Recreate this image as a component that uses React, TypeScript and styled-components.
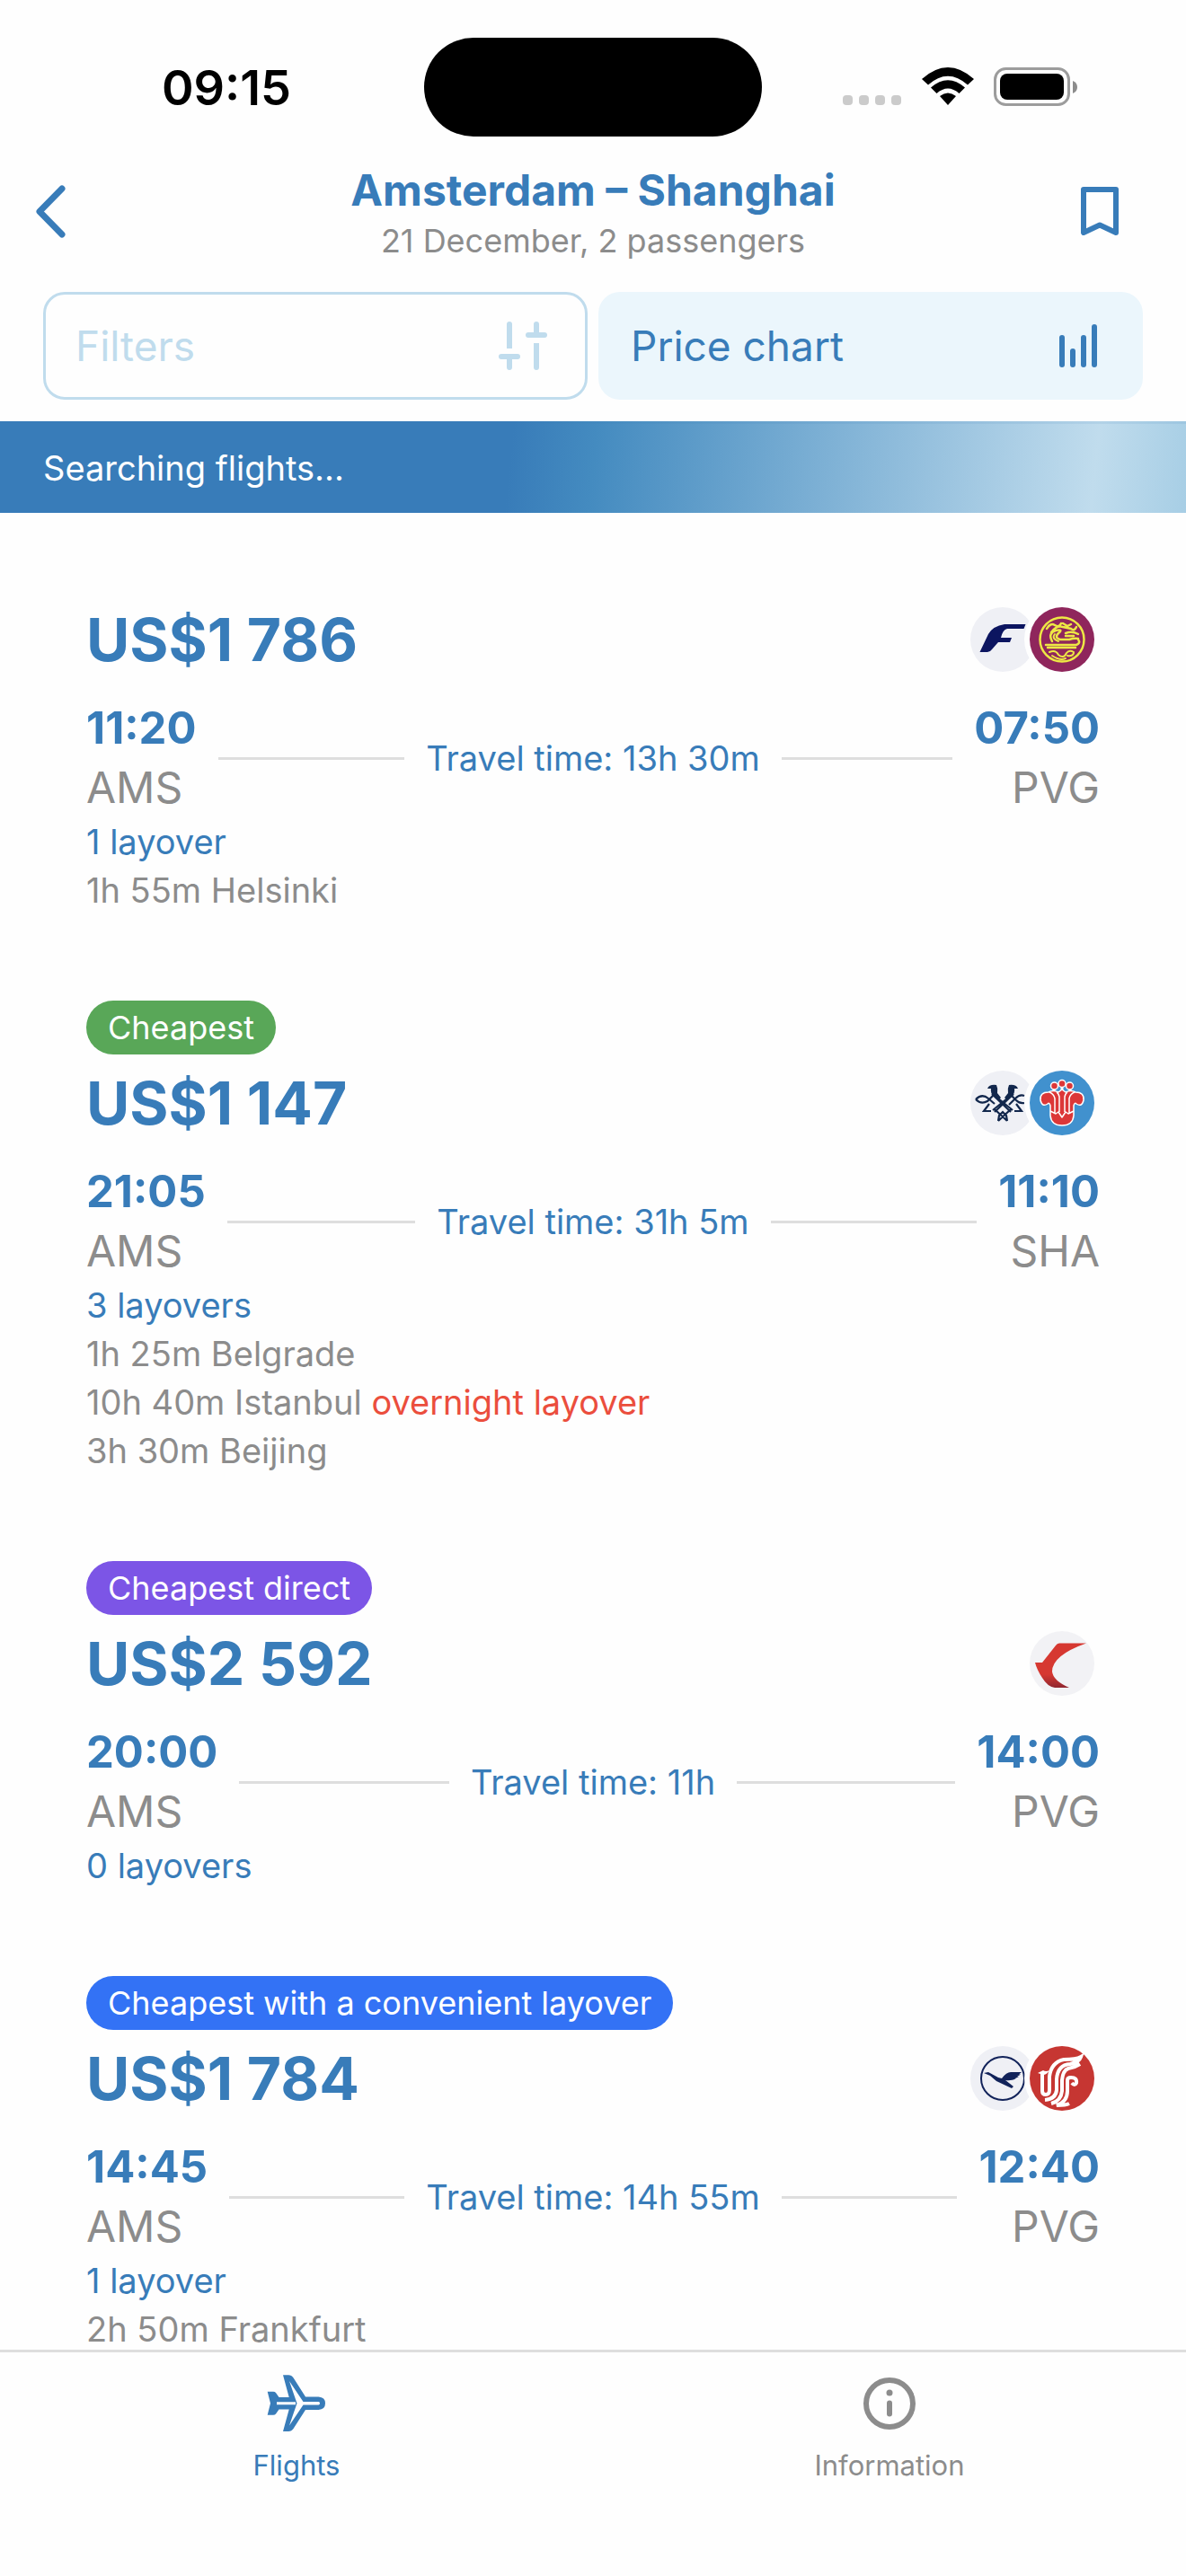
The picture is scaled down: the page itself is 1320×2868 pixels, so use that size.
import React from "react";
import styled, { createGlobalStyle } from "styled-components";

const BLUE = "#387cb9";
const GREY = "#8c8c8c";
const LINE = "#dedede";
const PALE = "#c0dced";

const Global = createGlobalStyle`
  * { box-sizing: border-box; }
  body { margin: 0; background: #fefefe; font-family: Inter, "Liberation Sans", sans-serif; }
  button { font: inherit; border: 0; background: none; padding: 0; cursor: pointer; }
  h1, h2, p, ul { margin: 0; padding: 0; font-weight: inherit; }
  ul { list-style: none; }
  svg { display: block; }
`;

const Screen = styled.div`
  height: 100vh;
  display: flex;
  flex-direction: column;
  overflow: hidden;
`;

const StatusBar = styled.div`
  display: grid;
  grid-template-columns: 1fr 376px 1fr;
  height: 180px;
  padding-top: 42px;
  flex: none;
`;
const Clock = styled.time`
  justify-self: center;
  padding-left: 32px;
  font-size: 54px;
  line-height: 112px;
  font-weight: 600;
`;
const Island = styled.div`
  height: 110px;
  border-radius: 55px;
  background: #000;
`;
const StatusIcons = styled.div`
  display: flex;
  justify-content: flex-end;
  padding: 33px 120px 0 0;
`;

const Header = styled.header`
  display: grid;
  grid-template-columns: 160px 1fr 160px;
  align-items: center;
  height: 109px;
  flex: none;
`;
const HeaderButton = styled.button<{ $end?: boolean }>`
  display: flex;
  justify-content: ${(p) => (p.$end ? "flex-end" : "flex-start")};
  padding: ${(p) => (p.$end ? "0 72px 0 0" : "0 0 0 36px")};
`;
const Titles = styled.div`
  align-self: start;
  text-align: center;
`;
const Title = styled.h1`
  font-size: 48px;
  line-height: 64px;
  font-weight: 700;
  color: ${BLUE};
`;
const Subtitle = styled.p`
  font-size: 36px;
  line-height: 48px;
  color: ${GREY};
`;

const Actions = styled.div`
  display: grid;
  grid-template-columns: 1fr 1fr;
  gap: 12px;
  padding: 36px 48px 24px;
  flex: none;
`;
const Action = styled.button<{ $outlined?: boolean }>`
  display: flex;
  align-items: center;
  justify-content: space-between;
  height: 120px;
  padding: 0 ${(p) => (p.$outlined ? 33 : 36)}px;
  border-radius: 24px;
  border: ${(p) => (p.$outlined ? `3px solid ${PALE}` : "0")};
  background: ${(p) => (p.$outlined ? "transparent" : "#ebf6fc")};
  color: ${(p) => (p.$outlined ? PALE : BLUE)};
  font-size: 46px;
`;

const Banner = styled.div`
  flex: none;
  height: 102px;
  padding: 0 48px;
  border-top: 3px solid rgba(56, 124, 185, 0.1);
  background: linear-gradient(96deg, #387cb9 0%, #387cb9 43%, #448bc0 50%, #c0dced 92%, #a7cee5 100%) border-box;
  color: #fff;
  font-size: 38px;
  line-height: 99px;
`;

const Results = styled.main`
  flex: 1;
  min-height: 0;
  overflow: hidden;
  display: flex;
  flex-direction: column;
  gap: 96px;
  padding: 93px 96px 0;
`;
const Card = styled.article`
  flex: none;
`;
const Badge = styled.span<{ $color: string }>`
  display: block;
  width: fit-content;
  height: 60px;
  margin-bottom: 6px;
  padding: 0 24px;
  border-radius: 30px;
  background: ${(p) => p.$color};
  color: #fff;
  font-size: 36px;
  line-height: 60px;
`;
const PriceRow = styled.div`
  display: flex;
  justify-content: space-between;
  align-items: center;
  height: 96px;
  padding-right: 6px;
`;
const Price = styled.h2`
  font-size: 66px;
  line-height: 96px;
  font-weight: 700;
  color: ${BLUE};
`;
const Logos = styled.div`
  display: flex;
`;
const Logo = styled.span<{ $bg: string }>`
  display: block;
  width: 72px;
  height: 72px;
  border-radius: 50%;
  background: ${(p) => p.$bg};
  & + & {
    margin-left: -6px;
    box-shadow: 0 0 0 6px #fefefe;
  }
`;
const Route = styled.div`
  display: grid;
  grid-template-columns: 1fr auto 1fr;
  align-items: center;
  gap: 24px;
  margin-top: 18px;
`;
const Leg = styled.div`
  display: flex;
  align-items: center;
  gap: 24px;
`;
const Stop = styled.div<{ $end?: boolean }>`
  text-align: ${(p) => (p.$end ? "right" : "left")};
`;
const Time = styled.p`
  font-size: 49px;
  line-height: 66px;
  font-weight: 700;
  color: ${BLUE};
`;
const Airport = styled.p`
  font-size: 48px;
  line-height: 66px;
  color: ${GREY};
`;
const Rule = styled.span`
  flex: 1;
  height: 3px;
  background: ${LINE};
`;
const Duration = styled.p`
  font-size: 38px;
  line-height: 54px;
  color: ${BLUE};
`;
const Layovers = styled.ul`
  color: ${GREY};
  font-size: 38px;
  line-height: 54px;
`;
const LayoverCount = styled.p`
  font-size: 38px;
  line-height: 54px;
  color: ${BLUE};
`;
const Warning = styled.span`
  color: #eb4e3d;
`;

const TabBar = styled.nav`
  flex: none;
  display: grid;
  grid-template-columns: 1fr 1fr;
  height: 252px;
  border-top: 3px solid ${LINE};
  background: #fefefe;
`;
const Tab = styled.button<{ $active?: boolean }>`
  display: flex;
  flex-direction: column;
  align-items: center;
  justify-content: flex-start;
  gap: 12px;
  padding-top: 21px;
  color: ${(p) => (p.$active ? BLUE : GREY)};
  font-size: 31px;
  line-height: 42px;
`;

const PhoneStatus = () => (
  <svg width="262" height="44" viewBox="0 0 262 44" aria-hidden="true">
    <g fill="#cbcbcb">
      {[0, 18, 36, 54].map((x) => (
        <rect key={x} x={x} y="31" width="11" height="11" rx="4" />
      ))}
    </g>
    <path d="M88 13Q117 -13 146 13L139 19.500Q117 0 95 19.500ZM98 22.500Q117 6 136 22.500L129.500 29Q117 18 104.500 29ZM108 32Q117 25 126 32L117 42Z" fill="#000" />
    <rect x="169.500" y="1.500" width="82" height="40" rx="12" fill="none" stroke="#9c9c9c" strokeWidth="3" />
    <rect x="175" y="7" width="71" height="29" rx="8" fill="#000" />
    <path d="M256 15q5 2 5 7t-5 7z" fill="#8c8c8c" />
  </svg>
);

const BackIcon = () => (
  <svg width="42" height="66" viewBox="0 0 42 66" fill="none" stroke={BLUE} strokeWidth="7" strokeLinecap="round" strokeLinejoin="round">
    <path d="M33 7L8 32.500L33 58" />
  </svg>
);
const BookmarkIcon = () => (
  <svg width="48" height="60" viewBox="0 0 48 60" fill="none" stroke={BLUE} strokeWidth="6" strokeLinecap="round" strokeLinejoin="round">
    <path d="M6 5H42V53L24 44.500L6 53Z" />
  </svg>
);
const FilterIcon = () => (
  <svg width="72" height="72" viewBox="0 0 72 72" fill="none" stroke={PALE} strokeWidth="6">
    <path strokeLinecap="round" d="M12 48H30M42 24H60M21 12V14M21 48V60M51 12V24M51 58V60" />
    <path d="M21 12V39M51 33V60" />
  </svg>
);
const ChartIcon = () => (
  <svg width="72" height="72" viewBox="0 0 72 72" fill="none" stroke={BLUE} strokeWidth="6" strokeLinecap="round">
    <path d="M18 27V57M30 42V57M42 27V57M54 15V57" />
  </svg>
);
const PlaneIcon = () => (
  <svg width="72" height="72" viewBox="0 0 72 72" fill="currentColor">
    <path d="M3.700 22.700H10Q12 22.700 13 24L16.500 29H27.700L21 4.300H27Q30.500 4.300 32.500 7.300L46 28.500H60.500Q68 29 68 35.700Q68 42.400 60.500 43H46L32.500 64.100Q30.500 67.100 27 67.100H21L27.700 42.400H16.500L13 47.400Q12 48.700 10 48.700H3.700L7 35.700Z" />
    <path fill="#fefefe" d="M14 34.200H35V37.200H14ZM28 11L43.500 34H60.500Q62 34.200 62 35.700Q62 37.200 60.500 37.400H43.500L28 60.400L36.500 35.700Z" />
  </svg>
);
const InfoIcon = () => (
  <svg width="72" height="72" viewBox="0 0 72 72" fill="none" stroke="currentColor" strokeWidth="6" strokeLinecap="round">
    <circle cx="36" cy="36" r="26" />
    <path d="M36 35.500V47.500" />
    <circle cx="36" cy="24" r="3.500" fill="currentColor" stroke="none" />
  </svg>
);

const Finnair = () => (
  <svg width="72" height="72" viewBox="0 0 72 72" fill="#0c1560">
    <path d="M10.500 50L20 30Q25 21 38 19H61.500L59.500 24H41Q36 25 34 34H46L44 39H31L24 47Q22 50 19 50Z" />
  </svg>
);
const Juneyao = () => (
  <svg width="72" height="72" viewBox="0 0 72 72" fill="none" stroke="#ede844" strokeLinecap="round">
    <circle cx="36" cy="36" r="24.500" strokeWidth="2.500" />
    <path strokeWidth="2.500" d="M19 24Q23 17 28 20T35 18M24 28Q30 20 37 22L46 24Q50 27 52 22M37 18L42 21L46 19M25 38Q20 29 29 26Q38 24 32 29Q27 34 34 36H44Q50 34 54 35M40 29Q47 26 54 30M40 32H49M18 42H52Q57 40 54 36M20 45H51" />
    <path strokeWidth="2" d="M22 50Q29 47 32 53Q38 58 41 51Q44 47 49 50M25 54Q34 60 40 57M42 54Q48 55 49 51M28 30Q24 35 32 38" />
  </svg>
);
const AirSerbia = () => (
  <svg width="72" height="72" viewBox="0 0 72 72" fill="none" stroke="#12274c" strokeWidth="2.200">
    <path fill="#12274c" stroke="none" d="M19 20Q21 15 29 16Q31 20 30 25L34 30L31 33L26 28Q22 25 23 20ZM53 20Q51 15 43 16Q41 20 42 25L38 30L41 33L46 28Q50 25 49 20Z" />
    <path d="M31 31L47 44M41 31L25 44M24 26L45 46M48 26L27 46M23 45L15 45L21 37M49 45L57 45L51 37M27 43L41 56M45 43L31 56M6 32Q13 25 20 31L27 37M6 32Q12 38 19 34L25 28M60 28Q55 26 50 31L43 38M60 36Q55 37 51 33L46 28M31 56L32 50L36 46L40 50L41 56" />
  </svg>
);
const ChinaSouthern = () => (
  <svg width="72" height="72" viewBox="0 0 72 72" fill="#dc3738" stroke="#fff" strokeWidth="1.500" strokeLinejoin="round">
    <path d="M27 19V29M36 17V29M45 19V29" strokeWidth="3" />
    <circle cx="27.500" cy="17" r="4" />
    <circle cx="36" cy="14.500" r="4" />
    <circle cx="44.500" cy="17" r="4" />
    <path d="M23 46V39Q22 35 20 37Q14 41 12 33Q11 24 21 24Q26 21 32 24L36 21L40 24Q46 21 51 24Q61 24 60 33Q58 41 52 37Q50 35 49 39V50Q48 61 36 61Q24 61 23 50Z" />
    <path d="M28 47V31Q27 26 22 24M33 46V29Q32 25 30 24M39 46V29Q40 25 42 24M44 47V31Q45 26 50 24M23 45L29 48L32 46L36 52L40 46L43 48L49 45" fill="none" />
  </svg>
);
const ChinaEastern = () => (
  <svg width="72" height="72" viewBox="0 0 72 72">
    <defs>
      <linearGradient id="crimson" x1="0" y1="0" x2="0" y2="1">
        <stop offset="0.700" stopColor="#d63831" />
        <stop offset="1" stopColor="#8f2730" />
      </linearGradient>
    </defs>
    <path fill="url(#crimson)" d="M6 35H14L29 16Q30.500 13.500 33 13.500H63Q25 27 25 45Q26 55 44 63H28Q20 62 14 52Q8 43 6 35Z" />
  </svg>
);
const Lufthansa = () => (
  <svg width="72" height="72" viewBox="0 0 72 72" fill="#12235a">
    <circle cx="36" cy="36" r="24" fill="none" stroke="#12235a" strokeWidth="2" />
    <path d="M15 30L20 29L31 35L35 36Q40 29 45 29H57L54 31.500H56L52 34H54L49 36.500H51Q45 39 39 38L48 45L46 47L29 39L22 33Z" />
  </svg>
);
const AirChina = () => (
  <svg width="72" height="72" viewBox="0 0 72 72" fill="none" stroke="#fff" strokeWidth="4">
    <path fill="#fff" stroke="none" d="M9 30L15 27Q18 29 22 27Q19 32 15 32Z" />
    <path d="M14 30V50Q14 54 18 54Q22 54 22 49V34Q24 18 38 15Q52 15 57 12Q55 18 45 20Q31 21 30 37V49Q29 59 17 60M56 20Q50 24 43 25Q37 27 36 38V50Q35 61 24 64M44 64Q40 66 30 66Q42 62 42 50V38Q42 35 46 35Q53 35 52 41Q50 45 47 41" />
  </svg>
);

type Airline = { name: string; bg: string; Mark: React.FC };
type Flight = {
  price: string;
  badge?: { text: string; color: string };
  airlines: Airline[];
  depart: [string, string];
  arrive: [string, string];
  duration: string;
  summary: string;
  layovers: { text: string; warning?: string }[];
};

const FLIGHTS: Flight[] = [
  {
    price: "US$1\u00a0786",
    airlines: [
      { name: "Finnair", bg: "#eff0f5", Mark: Finnair },
      { name: "Juneyao Air", bg: "#8f265c", Mark: Juneyao },
    ],
    depart: ["11:20", "AMS"],
    arrive: ["07:50", "PVG"],
    duration: "13h 30m",
    summary: "1 layover",
    layovers: [{ text: "1h 55m Helsinki" }],
  },
  {
    price: "US$1\u00a0147",
    badge: { text: "Cheapest", color: "#59a758" },
    airlines: [
      { name: "Air Serbia", bg: "#eff0f5", Mark: AirSerbia },
      { name: "China Southern", bg: "#4191ce", Mark: ChinaSouthern },
    ],
    depart: ["21:05", "AMS"],
    arrive: ["11:10", "SHA"],
    duration: "31h 5m",
    summary: "3 layovers",
    layovers: [
      { text: "1h 25m Belgrade" },
      { text: "10h 40m Istanbul", warning: "overnight layover" },
      { text: "3h 30m Beijing" },
    ],
  },
  {
    price: "US$2\u00a0592",
    badge: { text: "Cheapest direct", color: "#7c55e6" },
    airlines: [{ name: "China Eastern", bg: "#f2f2f5", Mark: ChinaEastern }],
    depart: ["20:00", "AMS"],
    arrive: ["14:00", "PVG"],
    duration: "11h",
    summary: "0 layovers",
    layovers: [],
  },
  {
    price: "US$1\u00a0784",
    badge: { text: "Cheapest with a convenient layover", color: "#3372f5" },
    airlines: [
      { name: "Lufthansa", bg: "#eff0f5", Mark: Lufthansa },
      { name: "Air China", bg: "#c63632", Mark: AirChina },
    ],
    depart: ["14:45", "AMS"],
    arrive: ["12:40", "PVG"],
    duration: "14h 55m",
    summary: "1 layover",
    layovers: [{ text: "2h 50m Frankfurt" }],
  },
];

const FlightCard = ({ flight }: { flight: Flight }) => (
  <Card>
    {flight.badge && <Badge $color={flight.badge.color}>{flight.badge.text}</Badge>}
    <PriceRow>
      <Price>{flight.price}</Price>
      <Logos>
        {flight.airlines.map(({ name, bg, Mark }) => (
          <Logo key={name} $bg={bg} role="img" aria-label={name}>
            <Mark />
          </Logo>
        ))}
      </Logos>
    </PriceRow>
    <Route>
      <Leg>
        <Stop>
          <Time>{flight.depart[0]}</Time>
          <Airport>{flight.depart[1]}</Airport>
        </Stop>
        <Rule />
      </Leg>
      <Duration>Travel time: {flight.duration}</Duration>
      <Leg>
        <Rule />
        <Stop $end>
          <Time>{flight.arrive[0]}</Time>
          <Airport>{flight.arrive[1]}</Airport>
        </Stop>
      </Leg>
    </Route>
    <LayoverCount>{flight.summary}</LayoverCount>
    <Layovers>
      {flight.layovers.map((l) => (
        <li key={l.text}>
          {l.text} {l.warning && <Warning>{l.warning}</Warning>}
        </li>
      ))}
    </Layovers>
  </Card>
);

export default function App() {
  return (
    <Screen>
      <Global />
      <StatusBar>
        <Clock>09:15</Clock>
        <Island />
        <StatusIcons>
          <PhoneStatus />
        </StatusIcons>
      </StatusBar>
      <Header>
        <HeaderButton aria-label="Back">
          <BackIcon />
        </HeaderButton>
        <Titles>
          <Title>Amsterdam – Shanghai</Title>
          <Subtitle>21 December, 2 passengers</Subtitle>
        </Titles>
        <HeaderButton $end aria-label="Save search">
          <BookmarkIcon />
        </HeaderButton>
      </Header>
      <Actions>
        <Action $outlined>
          Filters
          <FilterIcon />
        </Action>
        <Action>
          Price chart
          <ChartIcon />
        </Action>
      </Actions>
      <Banner role="status">Searching flights...</Banner>
      <Results>
        {FLIGHTS.map((f) => (
          <FlightCard key={f.price} flight={f} />
        ))}
      </Results>
      <TabBar>
        <Tab $active>
          <PlaneIcon />
          Flights
        </Tab>
        <Tab>
          <InfoIcon />
          Information
        </Tab>
      </TabBar>
    </Screen>
  );
}
